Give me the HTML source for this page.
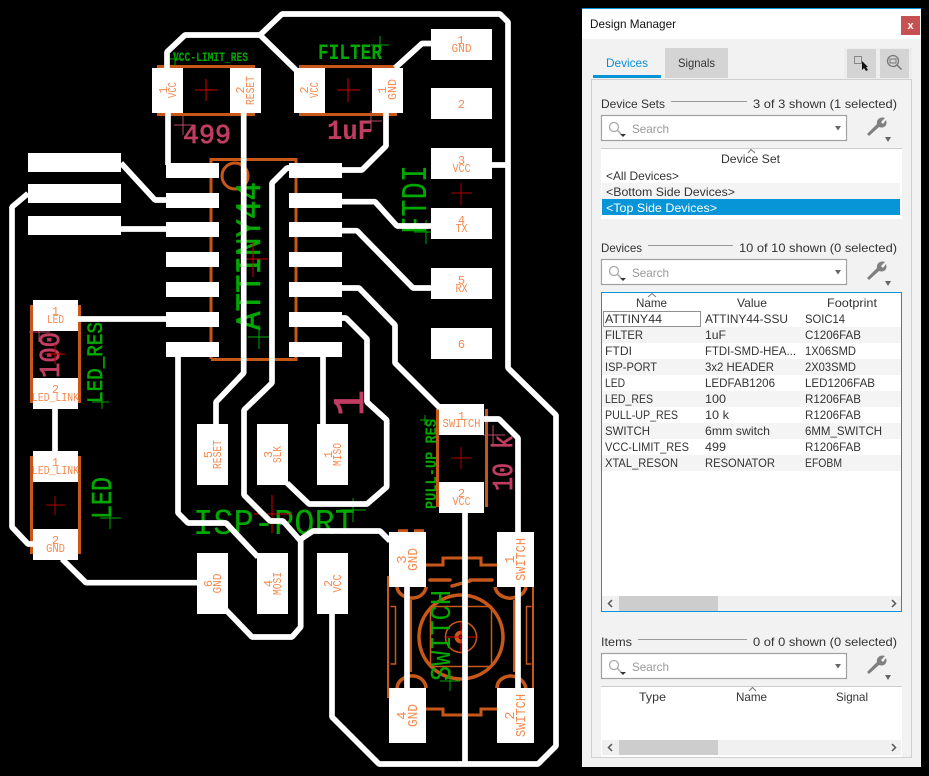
<!DOCTYPE html>
<html><head><meta charset="utf-8"><style>
html,body{margin:0;padding:0;background:#000;width:929px;height:776px;overflow:hidden}
svg{display:block}
.p{font:12px "Liberation Mono",monospace;fill:#f58a50;text-anchor:middle}
.g{font-family:"Liberation Mono",monospace;fill:#00a800}
.gs{stroke:#00a800;stroke-width:.6px}
.m{font-family:"Liberation Mono",monospace;fill:#c03c60;stroke:#c03c60;stroke-width:.8px}
.t{font:12px "Liberation Sans",sans-serif;fill:#333}
</style></head><body>
<svg width="929" height="776" viewBox="0 0 929 776" xmlns="http://www.w3.org/2000/svg">
<rect width="929" height="776" fill="#000"/>
<!-- orange -->
<g fill="none" stroke="#c8581a" stroke-width="3">
<path d="M157 66.5H255M157 114.5H255M299 66.5H395M299 114.5H397"/>
<path d="M211 359V159.500H296V359.500H211"/>
<circle cx="235" cy="176" r="13"/>
<path d="M31.500 305V403M79.500 305V403M31.500 456V554M79.500 456V554M437.500 409V507M486.500 409V507"/>
<circle cx="461" cy="637" r="42" stroke-width="3.500"/>
<rect x="430.500" y="606.500" width="61" height="60" stroke-width="1.500"/>
<circle cx="461" cy="637" r="15.500" stroke-width="1.500"/>
<circle cx="461" cy="637" r="4.500" stroke-width="4"/>
<path d="M426 565H443V558H481V565H497M426 709H443V715H481V709H497"/>
<path d="M388 576V698M533 576V698M411 600V672M514 600V672" stroke-width="2"/>
<path d="M390.500 606.500H395.500V664H390.500M531.500 606.500H526.500V664H531.500" stroke-width="1.500"/>
<path d="M430 580H450M470 580H492M452 586L470 581" stroke-width="3.500" stroke-linecap="round"/>
<path d="M397 587C398 596 410 600 418 597 423 595 426 590 426 587M495 587C497 597 509 600 516 597 522 595 525 592 526 587M397 688C398 678 410 674 418 677 423 679 426 684 426 688M497 688C497 678 509 674 516 677 522 679 525 684 526 688M398 531H408M414 531H424" stroke-width="3.500"/>
</g>
<!-- green -->
<text class="g" font-weight="bold" font-size="13" x="173" y="61" textLength="75" lengthAdjust="spacingAndGlyphs">VCC-LIMIT_RES</text>
<text class="g" font-weight="bold" font-size="22" x="318" y="59" textLength="64" lengthAdjust="spacingAndGlyphs">FILTER</text>
<text class="g" font-size="36" transform="translate(426,234) rotate(-90)" textLength="69" lengthAdjust="spacingAndGlyphs">FTDI</text>
<text class="g gs" font-size="35" transform="translate(260,330) rotate(-90)" textLength="148" lengthAdjust="spacingAndGlyphs">ATTINY44</text>
<text class="g gs" font-size="22" transform="translate(102,403) rotate(-90)" textLength="81" lengthAdjust="spacingAndGlyphs">LED_RES</text>
<text class="g gs" font-size="29" transform="translate(111,519) rotate(-90)" textLength="42" lengthAdjust="spacingAndGlyphs">LED</text>
<text class="g" font-size="36" x="193" y="534" textLength="162" lengthAdjust="spacingAndGlyphs">ISP-PORT</text>
<text class="g" font-size="29" transform="translate(450,681) rotate(-90)" textLength="91" lengthAdjust="spacingAndGlyphs">SWITCH</text>
<text class="g" font-weight="bold" font-size="16" transform="translate(436,509) rotate(-90)" textLength="90" lengthAdjust="spacingAndGlyphs">PULL-UP_RES</text>
<g stroke="#00a800" stroke-width="1" fill="none">
<path d="M168 59H182M175 52V66"/>
<path d="M371 45H389M380 36V54"/>
<path d="M414 232H431M426 220V244"/>
<path d="M248 337H270M259 325V349"/>
<path d="M92 402H109M102 392V409"/>
<path d="M100 518H121M110 508V529"/>
<path d="M340 510H366M353 498V522"/>
<path d="M440 681H460M450 670V691"/>
<path d="M420 420H431M425 415V425"/>
</g>
<!-- maroon -->
<text class="m" font-size="27" x="183" y="143" textLength="48" lengthAdjust="spacingAndGlyphs">499</text>
<text class="m" font-size="28" font-weight="bold" style="stroke-width:0" x="327" y="139" textLength="46" lengthAdjust="spacingAndGlyphs">1uF</text>
<text class="m" font-size="29" transform="translate(59,378) rotate(-90)" textLength="46" lengthAdjust="spacingAndGlyphs">100</text>
<text class="m" font-size="29" transform="translate(512,491) rotate(-90)" textLength="56" lengthAdjust="spacingAndGlyphs">10 k</text>
<text class="m" font-size="44" transform="translate(363,403) rotate(-90)" text-anchor="middle">1</text>
<g stroke="#b84a68" stroke-width="1" fill="none">
<path d="M174 125H194M183 115V135M29 332H50M39 322V342M361 121H382M371 111V131M483 435H505M493 425V445"/>
</g>
<!-- red -->
<g stroke-width="1" fill="none">
<path stroke="#d00000" d="M195 90H218M206 79V101M337 90H360M348 78V102M45 354H65M55 344V364M254 514H292M272 495V533M242 259H268M253 242V277"/>
<path stroke="#b00000" d="M451 193H472M461 183V205M451 458H472M461 447V469M46 505H65M55 496V515"/>
<path stroke="#e00000" d="M446 637H478M461 622V654"/>
</g>
<!-- traces -->
<g fill="none" stroke="#fff" stroke-width="5.700" stroke-linejoin="bevel">
<polyline points="167,68 167,52 185,35 260,35 282,14 500,14 508,22 508,368 556,415 556,746 538,764 379,764 332,717 332,614"/>
<polyline points="260,35 298,72"/>
<path d="M492 165H508M465 513V764"/>
<path d="M168 113V165"/>
<polyline points="243.700,113 243.700,373 216,402 216,424"/>
<polyline points="289,168 287,168 272,183 272,383 244,410 244,495 270,521 283,521 300.700,541 300.700,627 292,637 252,637 226,610"/>
<polyline points="298,541 313,531 380,531 390,541"/>
<polyline points="178,357 178,513 188,523 226,523 258,557"/>
<polyline points="28,193.500 12,207 12,527 28,544 35,544"/>
<polyline points="121,163 155,200 166,200"/>
<path d="M121 229H166M78 319H166M55 409V451"/>
<polyline points="62,559 86,582.700 197,582.700"/>
<polyline points="395,68 422,43.500 431,43.500"/>
<polyline points="386,113 386,146 362,170 342,170"/>
<polyline points="342,201.700 375,201.700 397,226 431,226"/>
<polyline points="342,230.700 357,230.700 413,288 431,288"/>
<polyline points="342,288 359,288 395,325 395,363 440,408"/>
<polyline points="342,318 346,318 367,339 367,402 386.700,420 386.700,487 367,504 309,504 287,483"/>
<path d="M323 357V424"/>
<polyline points="484,419 499,419 518,438 518,532"/>
<path d="M518 587V688M407 587V688"/>
</g>
<!-- pads -->
<g fill="#fff">
<rect x="152" y="68" width="31" height="45"/><rect x="230" y="68" width="31" height="45"/>
<rect x="294" y="68" width="31" height="45"/><rect x="372" y="68" width="31" height="45"/>
<rect x="431" y="29" width="61" height="31"/><rect x="431" y="88" width="61" height="31"/><rect x="431" y="148" width="61" height="31"/><rect x="431" y="208" width="61" height="31"/><rect x="431" y="268" width="61" height="31"/><rect x="431" y="328" width="61" height="31"/>
<rect x="28" y="153" width="93" height="19"/><rect x="28" y="184" width="93" height="19"/><rect x="28" y="216" width="93" height="19"/>
<rect x="166" y="163" width="53" height="15"/><rect x="166" y="193" width="53" height="15"/><rect x="166" y="222" width="53" height="15"/><rect x="166" y="252" width="53" height="15"/><rect x="166" y="282" width="53" height="15"/><rect x="166" y="312" width="53" height="15"/><rect x="166" y="342" width="53" height="15"/>
<rect x="289" y="163" width="53" height="15"/><rect x="289" y="193" width="53" height="15"/><rect x="289" y="222" width="53" height="15"/><rect x="289" y="252" width="53" height="15"/><rect x="289" y="282" width="53" height="15"/><rect x="289" y="312" width="53" height="15"/><rect x="289" y="342" width="53" height="15"/>
<rect x="33" y="300" width="45" height="31"/><rect x="33" y="378" width="45" height="31"/><rect x="33" y="451" width="45" height="31"/><rect x="33" y="529" width="45" height="31"/>
<rect x="439" y="404" width="45" height="31"/><rect x="439" y="482" width="45" height="31"/>
<rect x="197" y="424" width="31" height="61"/><rect x="257" y="424" width="31" height="61"/><rect x="317" y="424" width="31" height="61"/>
<rect x="197" y="553" width="31" height="61"/><rect x="257" y="553" width="31" height="61"/><rect x="317" y="553" width="31" height="61"/>
<rect x="389" y="532" width="37" height="55"/><rect x="389" y="688" width="37" height="55"/><rect x="497" y="532" width="37" height="55"/><rect x="497" y="688" width="37" height="55"/>
</g>
<!-- pad labels -->
<g class="p">
<text class="p" transform="translate(167,90) rotate(-90)">1</text><text class="p" transform="translate(176,90) rotate(-90)" textLength="16" lengthAdjust="spacingAndGlyphs">VCC</text>
<text class="p" transform="translate(244,90) rotate(-90)">2</text><text class="p" transform="translate(254,90.500) rotate(-90)" textLength="29" lengthAdjust="spacingAndGlyphs">RESET</text>
<text class="p" transform="translate(308,90) rotate(-90)">2</text><text class="p" transform="translate(318,90) rotate(-90)" textLength="16" lengthAdjust="spacingAndGlyphs">VCC</text>
<text class="p" transform="translate(386,90) rotate(-90)">1</text><text class="p" transform="translate(396,89.500) rotate(-90)" textLength="21" lengthAdjust="spacingAndGlyphs">GND</text>
<text class="p" x="461" y="44">1</text><text class="p" x="461.500" y="52" textLength="20" lengthAdjust="spacingAndGlyphs">GND</text>
<text class="p" x="461.500" y="108">2</text>
<text class="p" x="461.500" y="164">3</text><text class="p" x="461.500" y="172" textLength="18" lengthAdjust="spacingAndGlyphs">VCC</text>
<text class="p" x="461.500" y="224">4</text><text class="p" x="461.500" y="232" textLength="12" lengthAdjust="spacingAndGlyphs">TX</text>
<text class="p" x="461.500" y="284">5</text><text class="p" x="461.500" y="292" textLength="12" lengthAdjust="spacingAndGlyphs">RX</text>
<text class="p" x="461.500" y="348">6</text>
<text class="p" x="461.500" y="420">1</text><text class="p" x="461.500" y="427" textLength="38" lengthAdjust="spacingAndGlyphs">SWITCH</text>
<text class="p" x="461.500" y="497">2</text><text class="p" x="461.500" y="505" textLength="18" lengthAdjust="spacingAndGlyphs">VCC</text>
<text class="p" x="55.500" y="315">1</text><text class="p" x="55.500" y="323" textLength="17" lengthAdjust="spacingAndGlyphs">LED</text>
<text class="p" x="55.500" y="393">2</text><text class="p" x="55.500" y="401" textLength="47" lengthAdjust="spacingAndGlyphs">LED_LINK</text>
<text class="p" x="55.500" y="466">1</text><text class="p" x="55.500" y="474" textLength="47" lengthAdjust="spacingAndGlyphs">LED_LINK</text>
<text class="p" x="55.500" y="544">2</text><text class="p" x="55.500" y="552" textLength="19" lengthAdjust="spacingAndGlyphs">GND</text>
<text class="p" transform="translate(212,454.500) rotate(-90)">5</text><text class="p" transform="translate(221,454.500) rotate(-90)" textLength="29" lengthAdjust="spacingAndGlyphs">RESET</text>
<text class="p" transform="translate(272,454.500) rotate(-90)">3</text><text class="p" transform="translate(281,454.500) rotate(-90)" textLength="17" lengthAdjust="spacingAndGlyphs">SLK</text>
<text class="p" transform="translate(332,454.500) rotate(-90)">1</text><text class="p" transform="translate(341,454.500) rotate(-90)" textLength="23" lengthAdjust="spacingAndGlyphs">MISO</text>
<text class="p" transform="translate(212,583.500) rotate(-90)">6</text><text class="p" transform="translate(221,583.500) rotate(-90)" textLength="20" lengthAdjust="spacingAndGlyphs">GND</text>
<text class="p" transform="translate(272,583.500) rotate(-90)">4</text><text class="p" transform="translate(281,583.500) rotate(-90)" textLength="23" lengthAdjust="spacingAndGlyphs">MOSI</text>
<text class="p" transform="translate(332,583.500) rotate(-90)">2</text><text class="p" transform="translate(341,583.500) rotate(-90)" textLength="18" lengthAdjust="spacingAndGlyphs">VCC</text>
<text class="p" style="font-size:14px" transform="translate(406,559.500) rotate(-90)">3</text><text class="p" style="font-size:14px" transform="translate(417,559.500) rotate(-90)" textLength="23" lengthAdjust="spacingAndGlyphs">GND</text>
<text class="p" style="font-size:14px" transform="translate(406,715.500) rotate(-90)">4</text><text class="p" style="font-size:14px" transform="translate(417,715.500) rotate(-90)" textLength="23" lengthAdjust="spacingAndGlyphs">GND</text>
<text class="p" style="font-size:14px" transform="translate(514,559.500) rotate(-90)">1</text><text class="p" style="font-size:14px" transform="translate(525,559.500) rotate(-90)" textLength="43" lengthAdjust="spacingAndGlyphs">SWITCH</text>
<text class="p" style="font-size:14px" transform="translate(514,715.500) rotate(-90)">2</text><text class="p" style="font-size:14px" transform="translate(525,715.500) rotate(-90)" textLength="43" lengthAdjust="spacingAndGlyphs">SWITCH</text>
</g>
<!-- panel -->
<rect x="582" y="8" width="339" height="759" fill="#f2f2f2"/>
<rect x="582" y="8" width="339" height="31" fill="#fff"/>
<rect x="582" y="8" width="339" height="1" fill="#0a94d8"/>
<text class="t" x="590" y="28" textLength="86" lengthAdjust="spacingAndGlyphs" style="fill:#111">Design Manager</text>
<rect x="901" y="16" width="19" height="19" fill="#c75050"/>
<text x="910.500" y="29" text-anchor="middle" style="font:bold 11px 'Liberation Sans',sans-serif;fill:#fff">x</text>
<rect x="591.500" y="79.500" width="320" height="678" fill="#f2f2f2" stroke="#d0d0d0"/>
<rect x="593" y="75" width="68" height="3" fill="#0795d8"/>
<text class="t" x="606" y="67" textLength="42" lengthAdjust="spacingAndGlyphs" style="fill:#0a8fd6">Devices</text>
<rect x="665" y="48" width="63" height="30" fill="#d4d4d4"/>
<text class="t" x="678" y="67" textLength="37" lengthAdjust="spacingAndGlyphs">Signals</text>
<rect x="844" y="48" width="68" height="31" fill="#ededed"/>
<rect x="847" y="49" width="29" height="29" fill="#d4d4d4"/><rect x="880" y="49" width="29" height="29" fill="#d4d4d4"/>
<rect x="854.500" y="56.500" width="7" height="7" fill="none" stroke="#888"/>
<path d="M862 61V70L864 68 866 71 868 70 866 67H868Z" fill="#111"/>
<circle cx="893" cy="61" r="5.500" fill="none" stroke="#777" stroke-width="1.300"/><rect x="890" y="59" width="6" height="4" fill="none" stroke="#777"/><path d="M897 65L901.500 69.500" stroke="#777" stroke-width="1.500"/>

<!-- Device sets -->
<text class="t" x="601" y="108" textLength="64" lengthAdjust="spacingAndGlyphs">Device Sets</text>
<rect x="671" y="101" width="76" height="1" fill="#999"/>
<text class="t" x="753" y="108" textLength="144" lengthAdjust="spacingAndGlyphs">3 of 3 shown (1 selected)</text>
<rect x="601.500" y="115.500" width="245" height="25" fill="#fff" stroke="#a0a0a0" stroke-width="1.200"/>
<circle cx="614" cy="127" r="4.500" fill="none" stroke="#aaa" stroke-width="1.300"/><path d="M617.500 130.500L621 134" stroke="#aaa" stroke-width="1.500"/><path d="M620 134H626L623 137Z" fill="#333"/>
<text class="t" x="632" y="133" textLength="37" lengthAdjust="spacingAndGlyphs" style="fill:#999">Search</text>
<path d="M835 126H841L838 130.500Z" fill="#666"/>
<path d="M869 136L867 134 877 124C876 120 880 116 885 118L881 122 883 124 886 120C888 125 884 129 879 127Z" fill="#808080"/><path d="M885 137H891L888 142Z" fill="#666"/>
<rect x="601" y="148" width="301" height="71" fill="#fff"/><rect x="601" y="148" width="301" height="1" fill="#ccc"/>
<rect x="602" y="183" width="298" height="16" fill="#f4f4f4"/>
<rect x="602" y="199" width="298" height="16" fill="#0795d8"/>
<path d="M748 153L751 149.500 755 153" fill="none" stroke="#777"/>
<text class="t" x="721" y="163" textLength="59" lengthAdjust="spacingAndGlyphs">Device Set</text>
<text class="t" x="606" y="180" textLength="73" lengthAdjust="spacingAndGlyphs">&lt;All Devices&gt;</text>
<text class="t" x="606" y="196" textLength="129" lengthAdjust="spacingAndGlyphs">&lt;Bottom Side Devices&gt;</text>
<text class="t" x="606" y="212" textLength="111" lengthAdjust="spacingAndGlyphs" style="fill:#fff">&lt;Top Side Devices&gt;</text>

<!-- Devices -->
<text class="t" x="601" y="252" textLength="41" lengthAdjust="spacingAndGlyphs">Devices</text>
<rect x="648" y="245" width="85" height="1" fill="#999"/>
<text class="t" x="739" y="252" textLength="158" lengthAdjust="spacingAndGlyphs">10 of 10 shown (0 selected)</text>
<rect x="601.500" y="259.500" width="245" height="25" fill="#fff" stroke="#a0a0a0" stroke-width="1.200"/>
<circle cx="614" cy="271" r="4.500" fill="none" stroke="#aaa" stroke-width="1.300"/><path d="M617.500 274.500L621 278" stroke="#aaa" stroke-width="1.500"/><path d="M620 278H626L623 281Z" fill="#333"/>
<text class="t" x="632" y="277" textLength="37" lengthAdjust="spacingAndGlyphs" style="fill:#999">Search</text>
<path d="M835 270H841L838 274.500Z" fill="#666"/>
<path d="M869 280L867 278 877 268C876 264 880 260 885 262L881 266 883 268 886 264C888 269 884 273 879 271Z" fill="#808080"/><path d="M885 281H891L888 286Z" fill="#666"/>
<rect x="601.500" y="292.500" width="300" height="319" fill="#fff" stroke="#0a94d8"/>
<rect x="602" y="327" width="299" height="16" fill="#f4f4f4"/><rect x="602" y="359" width="299" height="16" fill="#f4f4f4"/><rect x="602" y="391" width="299" height="16" fill="#f4f4f4"/><rect x="602" y="423" width="299" height="16" fill="#f4f4f4"/><rect x="602" y="455" width="299" height="16" fill="#f4f4f4"/>
<path d="M648 297L652 293.500 656 297" fill="none" stroke="#777"/>
<text class="t" x="636" y="307" textLength="31" lengthAdjust="spacingAndGlyphs">Name</text>
<text class="t" x="737" y="307" textLength="30" lengthAdjust="spacingAndGlyphs">Value</text>
<text class="t" x="827" y="307" textLength="50" lengthAdjust="spacingAndGlyphs">Footprint</text>
<rect x="603.500" y="311.500" width="97" height="15" fill="none" stroke="#222" stroke-dasharray="1 1"/>
<text class="t" x="605" y="323" textLength="57" lengthAdjust="spacingAndGlyphs">ATTINY44</text><text class="t" x="705" y="323" textLength="83" lengthAdjust="spacingAndGlyphs">ATTINY44-SSU</text><text class="t" x="805" y="323" textLength="40" lengthAdjust="spacingAndGlyphs">SOIC14</text>
<text class="t" x="605" y="339" textLength="38" lengthAdjust="spacingAndGlyphs">FILTER</text><text class="t" x="705" y="339" textLength="21" lengthAdjust="spacingAndGlyphs">1uF</text><text class="t" x="805" y="339" textLength="56" lengthAdjust="spacingAndGlyphs">C1206FAB</text>
<text class="t" x="605" y="355" textLength="27" lengthAdjust="spacingAndGlyphs">FTDI</text><text class="t" x="705" y="355" textLength="91" lengthAdjust="spacingAndGlyphs">FTDI-SMD-HEA...</text><text class="t" x="805" y="355" textLength="51" lengthAdjust="spacingAndGlyphs">1X06SMD</text>
<text class="t" x="605" y="371" textLength="52" lengthAdjust="spacingAndGlyphs">ISP-PORT</text><text class="t" x="705" y="371" textLength="69" lengthAdjust="spacingAndGlyphs">3x2 HEADER</text><text class="t" x="805" y="371" textLength="51" lengthAdjust="spacingAndGlyphs">2X03SMD</text>
<text class="t" x="605" y="387" textLength="20" lengthAdjust="spacingAndGlyphs">LED</text><text class="t" x="705" y="387" textLength="70" lengthAdjust="spacingAndGlyphs">LEDFAB1206</text><text class="t" x="805" y="387" textLength="70" lengthAdjust="spacingAndGlyphs">LED1206FAB</text>
<text class="t" x="605" y="403" textLength="48" lengthAdjust="spacingAndGlyphs">LED_RES</text><text class="t" x="705" y="403" textLength="21" lengthAdjust="spacingAndGlyphs">100</text><text class="t" x="805" y="403" textLength="56" lengthAdjust="spacingAndGlyphs">R1206FAB</text>
<text class="t" x="605" y="419" textLength="73" lengthAdjust="spacingAndGlyphs">PULL-UP_RES</text><text class="t" x="705" y="419" textLength="24" lengthAdjust="spacingAndGlyphs">10 k</text><text class="t" x="805" y="419" textLength="56" lengthAdjust="spacingAndGlyphs">R1206FAB</text>
<text class="t" x="605" y="435" textLength="45" lengthAdjust="spacingAndGlyphs">SWITCH</text><text class="t" x="705" y="435" textLength="65" lengthAdjust="spacingAndGlyphs">6mm switch</text><text class="t" x="805" y="435" textLength="77" lengthAdjust="spacingAndGlyphs">6MM_SWITCH</text>
<text class="t" x="605" y="451" textLength="84" lengthAdjust="spacingAndGlyphs">VCC-LIMIT_RES</text><text class="t" x="705" y="451" textLength="21" lengthAdjust="spacingAndGlyphs">499</text><text class="t" x="805" y="451" textLength="56" lengthAdjust="spacingAndGlyphs">R1206FAB</text>
<text class="t" x="605" y="467" textLength="73" lengthAdjust="spacingAndGlyphs">XTAL_RESON</text><text class="t" x="705" y="467" textLength="70" lengthAdjust="spacingAndGlyphs">RESONATOR</text><text class="t" x="805" y="467" textLength="37" lengthAdjust="spacingAndGlyphs">EFOBM</text>
<rect x="602" y="596" width="299" height="15" fill="#f0f0f0"/><rect x="619" y="596" width="99" height="15" fill="#cdcdcd"/>
<path d="M612 600L608.500 603.500 612 607M892 600L895.500 603.500 892 607" fill="none" stroke="#555" stroke-width="1.500"/>

<!-- Items -->
<text class="t" x="601" y="646" textLength="31" lengthAdjust="spacingAndGlyphs">Items</text>
<rect x="638" y="639" width="109" height="1" fill="#999"/>
<text class="t" x="753" y="646" textLength="144" lengthAdjust="spacingAndGlyphs">0 of 0 shown (0 selected)</text>
<rect x="601.500" y="653.500" width="245" height="25" fill="#fff" stroke="#a0a0a0" stroke-width="1.200"/>
<circle cx="614" cy="665" r="4.500" fill="none" stroke="#aaa" stroke-width="1.300"/><path d="M617.500 668.500L621 672" stroke="#aaa" stroke-width="1.500"/><path d="M620 672H626L623 675Z" fill="#333"/>
<text class="t" x="632" y="671" textLength="37" lengthAdjust="spacingAndGlyphs" style="fill:#999">Search</text>
<path d="M835 664H841L838 668.500Z" fill="#666"/>
<path d="M869 674L867 672 877 662C876 658 880 654 885 656L881 660 883 662 886 658C888 663 884 667 879 665Z" fill="#808080"/><path d="M885 675H891L888 680Z" fill="#666"/>
<rect x="601" y="686" width="301" height="71" fill="#fff"/><rect x="601" y="686" width="301" height="1" fill="#ccc"/>
<path d="M749 691L752.500 687.500 756 691" fill="none" stroke="#777"/>
<text class="t" x="639" y="701" textLength="27" lengthAdjust="spacingAndGlyphs">Type</text>
<text class="t" x="736" y="701" textLength="31" lengthAdjust="spacingAndGlyphs">Name</text>
<text class="t" x="836" y="701" textLength="32" lengthAdjust="spacingAndGlyphs">Signal</text>
<rect x="602" y="740" width="299" height="15" fill="#f0f0f0"/><rect x="619" y="740" width="99" height="15" fill="#cdcdcd"/>
<path d="M612 744L608.500 747.500 612 751M892 744L895.500 747.500 892 751" fill="none" stroke="#555" stroke-width="1.500"/>
</svg>
</body></html>
